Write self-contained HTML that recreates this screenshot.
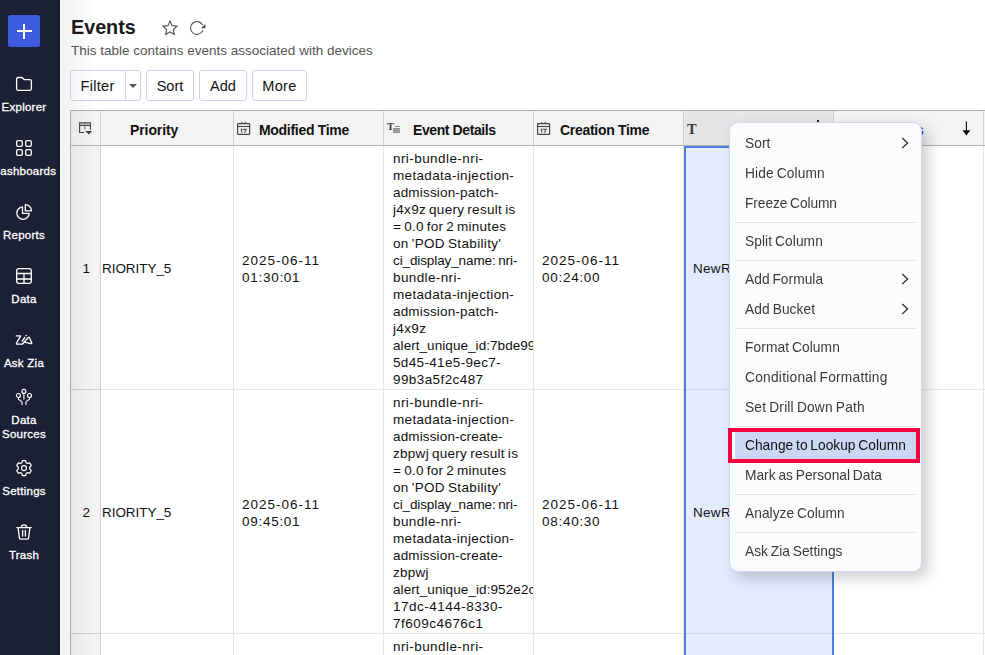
<!DOCTYPE html>
<html>
<head>
<meta charset="utf-8">
<style>
*{box-sizing:border-box;margin:0;padding:0}
html{background:#fff}
html,body{width:985px;height:655px;overflow:hidden;font-family:"Liberation Sans",sans-serif;color:#111}
body{position:relative}
.abs{position:absolute}
/* sidebar */
#side{position:absolute;left:0;top:0;width:60px;height:655px;background:#1c2035;overflow:hidden;border-right:1px solid #12162b}
#plus{position:absolute;left:8px;top:15px;width:32px;height:32px;background:#3f5be0;border-radius:2px}
#plus:before{content:"";position:absolute;left:8.5px;top:15.3px;width:15.5px;height:2px;background:#fff}
#plus:after{content:"";position:absolute;left:15.3px;top:8.5px;width:2px;height:15.5px;background:#fff}
.nav{position:absolute;left:-26px;width:100px;text-align:center;color:#fff;font-size:11.5px;line-height:14px;white-space:nowrap;letter-spacing:.25px;-webkit-text-stroke:.3px #fff}
.ico{position:absolute;left:16px;width:16px;height:16px}
.ico svg{display:block;width:16px;height:16px;overflow:visible;fill:none;stroke:#fff;stroke-width:1.3;stroke-linecap:round;stroke-linejoin:round}
#shade{position:absolute;left:61px;top:0;width:36px;height:655px;background:linear-gradient(to right,rgba(0,0,0,.05),rgba(0,0,0,.045) 10px,rgba(0,0,0,.02) 24px,rgba(0,0,0,0) 36px);z-index:4;pointer-events:none}
/* header */
#title{position:absolute;left:71px;top:12.5px;font-size:21px;font-weight:bold;line-height:28px;color:#1a1a1a;transform-origin:0 0;transform:scaleX(.94)}
#sub{position:absolute;left:71px;top:42px;font-size:13.5px;line-height:18px;color:#555;white-space:nowrap}
.btn{position:absolute;top:70px;height:31px;border:1px solid #cfd4ee;border-radius:3px;background:#fff;font-size:14.5px;line-height:29px;text-align:center;color:#111}
/* table */
#tbl{z-index:0;position:absolute;left:70px;top:110px;width:915px;height:545px;border-top:1px solid #b0b0b0;border-left:1px solid #b4b4b4;overflow:hidden}
.hd{position:absolute;top:0;height:35px;background:#f3f3f3;border-right:1px solid #d0d0d0;border-bottom:1px solid #b4b4b4;font-weight:bold;font-size:14px;line-height:38px;white-space:nowrap;color:#111}
.col{position:absolute;top:35px;height:510px;border-right:1px solid #e5e5e5}
.rowline{position:absolute;left:0;width:915px;height:1px;background:linear-gradient(to right,#d0d0d0 30px,#e8e8e8 30px)}
.cell{position:absolute;font-size:13.5px;line-height:17px;color:#111;white-space:nowrap;letter-spacing:.1px}
.ev{width:140px;overflow:hidden;word-spacing:-1px;font-size:13.5px}
/* menu */
#menu{position:absolute;left:729px;top:122px;width:193px;height:450px;background:#fbfcfe;border:1px solid #d3d8f1;border-radius:9px;box-shadow:6px 6px 15px rgba(0,0,0,.2);z-index:5;will-change:transform;opacity:.999}
.mi{position:absolute;left:15px;word-spacing:-1px;font-size:13.75px;line-height:31px;color:#2a2a2a;white-space:nowrap;height:30px}
.sep{position:absolute;left:5px;width:181px;height:1px;background:#e2e4ea}
.chev{position:absolute;left:171px;width:8px;height:12px}
</style>
</head>
<body>
<!-- table -->
<div id="tbl">
  <div class="hd" style="left:0;width:30px"><svg class="abs" style="left:7px;top:11px;width:15px;height:14px" viewBox="0 0 15 14"><path d="M6.2 10.5 H1.6 V0.9 H12.4 V7.7 M1.6 3.3 H12.4" fill="none" stroke="#444" stroke-width="1.15"/><path d="M6.9 0.9 V7.6" fill="none" stroke="#777" stroke-width="1.15"/><path d="M7.4 9 H14.1 L10.75 12.5 Z" fill="#3a3a3a"/></svg></div>
  <div class="hd" style="left:30px;width:133px"><span class="abs" style="left:29px;letter-spacing:-.1px">Priority</span></div>
  <div class="hd" style="left:163px;width:150px"><svg class="abs" style="left:3px;top:10px;width:14px;height:14px" viewBox="0 0 14 14"><rect x="0.6" y="2.6" width="12" height="10.8" rx="0.5" fill="none" stroke="#444" stroke-width="1.2"/><path d="M0.6 5.5 H12.6" stroke="#444" stroke-width="1.1"/><path d="M4.9 0.8 V2.6 M8.4 0.8 V2.6" stroke="#666" stroke-width="1.3"/><path d="M3.6 9 L4.7 8.2 V11.8 M6.2 8.4 H9.2 L7.4 11.8" fill="none" stroke="#555" stroke-width="1.15"/></svg><span class="abs" style="left:25px;letter-spacing:-.3px">Modified Time</span></div>
  <div class="hd" style="left:313px;width:150px"><span class="abs" style="left:3px;top:10px;line-height:12px;font-family:'Liberation Serif',serif;font-size:10.5px;color:#3a3a3a;font-weight:bold">T</span><span class="abs" style="left:11px;top:15px;width:5px;height:1px;background:#8c8c8c"></span><span class="abs" style="left:9px;top:17px;width:7px;height:5px;background:repeating-linear-gradient(#909090 0,#909090 1px,#a8a8a8 1px,#a8a8a8 2px)"></span><span class="abs" style="left:29px;letter-spacing:-.4px">Event Details</span></div>
  <div class="hd" style="left:463px;width:150px"><svg class="abs" style="left:3px;top:10px;width:14px;height:14px" viewBox="0 0 14 14"><rect x="0.6" y="2.6" width="12" height="10.8" rx="0.5" fill="none" stroke="#444" stroke-width="1.2"/><path d="M0.6 5.5 H12.6" stroke="#444" stroke-width="1.1"/><path d="M4.9 0.8 V2.6 M8.4 0.8 V2.6" stroke="#666" stroke-width="1.3"/><path d="M3.6 9 L4.7 8.2 V11.8 M6.2 8.4 H9.2 L7.4 11.8" fill="none" stroke="#555" stroke-width="1.15"/></svg><span class="abs" style="left:26px;letter-spacing:-.3px">Creation Time</span></div>
  <div class="hd" style="left:613px;width:150px;background:#e6e6e6"><span class="abs" style="left:3px;top:-1px;font-family:'Liberation Serif',serif;font-size:14.5px;color:#3a3a3a;font-weight:bold">T</span><span class="abs" style="left:133px;top:9px;width:2px;height:3px;background:#222"></span></div>
  <div class="hd" style="left:763px;width:150px"><span class="abs" style="left:82px;top:0;color:#1a4fc0;font-weight:bold;font-size:14px">s</span><svg class="abs" style="left:127px;top:10px;width:10px;height:15px" viewBox="0 0 10 15"><path d="M5.4 0.6 V11" stroke="#000" stroke-width="1.1"/><path d="M1.5 9.2 H9.3 L5.4 14.5 Z" fill="#000"/></svg></div><div class="hd" style="left:913px;width:10px"></div>
  <div class="col" style="left:0;width:30px;background:#f3f3f3;border-right:1px solid #d0d0d0"></div>
  <div class="col" style="left:30px;width:133px"></div>
  <div class="col" style="left:163px;width:150px"></div>
  <div class="col" style="left:313px;width:150px"></div>
  <div class="col" style="left:463px;width:150px"></div>
  <div class="col" style="left:613px;width:150px"></div>
  <div class="col" style="left:763px;width:150px"></div>
  <div class="rowline" style="top:278px"></div>
  <div class="rowline" style="top:522px"></div>
<div class="cell" style="left:11.5px;top:149px">1</div>
<div class="cell" style="left:31px;top:149px;letter-spacing:-.05px">RIORITY_5</div>
<div class="cell" style="left:171px;top:141px"><span style="letter-spacing:1px">2025-06-11</span><br><span style="letter-spacing:.72px">01:30:01</span></div>
<div class="cell" style="left:471px;top:141px"><span style="letter-spacing:1px">2025-06-11</span><br><span style="letter-spacing:.72px">00:24:00</span></div>
<div class="cell ev" style="left:322px;top:39px"><span style="display:block;letter-spacing:0.432px">nri-bundle-nri-</span><span style="display:block;letter-spacing:0.333px">metadata-injection-</span><span style="display:block;letter-spacing:0.174px">admission-patch-</span><span style="display:block;letter-spacing:0.294px">j4x9z query result is</span><span style="display:block;letter-spacing:0.262px">= 0.0 for 2 minutes</span><span style="display:block;letter-spacing:0.335px">on 'POD Stability'</span><span style="display:block;letter-spacing:-0.108px">ci_display_name: nri-</span><span style="display:block;letter-spacing:0.375px">bundle-nri-</span><span style="display:block;letter-spacing:0.333px">metadata-injection-</span><span style="display:block;letter-spacing:0.174px">admission-patch-</span><span style="display:block;letter-spacing:0.371px">j4x9z</span><span style="display:block;letter-spacing:0.059px">alert_unique_id:7bde99</span><span style="display:block;letter-spacing:0.341px">5d45-41e5-9ec7-</span><span style="display:block;letter-spacing:0.41px">99b3a5f2c487</span></div>
<div class="cell" style="left:622px;top:149px;z-index:3;letter-spacing:.3px">NewR</div>
<div class="cell" style="left:11.5px;top:393px">2</div>
<div class="cell" style="left:31px;top:393px;letter-spacing:-.05px">RIORITY_5</div>
<div class="cell" style="left:171px;top:385px"><span style="letter-spacing:1px">2025-06-11</span><br><span style="letter-spacing:.72px">09:45:01</span></div>
<div class="cell" style="left:471px;top:385px"><span style="letter-spacing:1px">2025-06-11</span><br><span style="letter-spacing:.72px">08:40:30</span></div>
<div class="cell ev" style="left:322px;top:283px"><span style="display:block;letter-spacing:0.432px">nri-bundle-nri-</span><span style="display:block;letter-spacing:0.333px">metadata-injection-</span><span style="display:block;letter-spacing:0.144px">admission-create-</span><span style="display:block;letter-spacing:0.279px">zbpwj query result is</span><span style="display:block;letter-spacing:0.262px">= 0.0 for 2 minutes</span><span style="display:block;letter-spacing:0.335px">on 'POD Stability'</span><span style="display:block;letter-spacing:-0.108px">ci_display_name: nri-</span><span style="display:block;letter-spacing:0.375px">bundle-nri-</span><span style="display:block;letter-spacing:0.333px">metadata-injection-</span><span style="display:block;letter-spacing:0.144px">admission-create-</span><span style="display:block;letter-spacing:0.246px">zbpwj</span><span style="display:block;letter-spacing:0.089px">alert_unique_id:952e2c</span><span style="display:block;letter-spacing:0.484px">17dc-4144-8330-</span><span style="display:block;letter-spacing:0.479px">7f609c4676c1</span></div>
<div class="cell" style="left:622px;top:393px;z-index:3;letter-spacing:.3px">NewR</div>
<div class="cell ev" style="left:322px;top:527px"><span style="display:block;letter-spacing:0.432px">nri-bundle-nri-</span></div>
  <div class="abs" id="selcol" style="left:613px;top:35px;width:150px;height:520px;background:rgba(66,120,240,.15);border:2px solid #4a7fe0"></div>
</div>

<div id="menu">
<div class="abs" style="left:5px;top:309px;width:181px;height:27px;background:#cbd7f3;border-radius:0 0 0 2px"></div>
<div class="abs" style="left:-2px;top:305px;width:192px;height:35px;border:4px solid #f2033f"></div>
<div class="mi" style="top:5px;color:#3a3a3a;letter-spacing:0.06px">Sort</div>
<svg class="chev" style="top:14px" viewBox="0 0 8 12"><path d="M1.2 1 L6.6 6 L1.2 11" fill="none" stroke="#333" stroke-width="1.3"/></svg>
<div class="mi" style="top:35px;color:#3a3a3a;letter-spacing:0.112px">Hide Column</div>
<div class="mi" style="top:65px;color:#3a3a3a;letter-spacing:-0.083px">Freeze Column</div>
<div class="mi" style="top:103px;color:#3a3a3a;letter-spacing:0.077px">Split Column</div>
<div class="mi" style="top:141px;color:#3a3a3a;letter-spacing:0.038px">Add Formula</div>
<svg class="chev" style="top:150px" viewBox="0 0 8 12"><path d="M1.2 1 L6.6 6 L1.2 11" fill="none" stroke="#333" stroke-width="1.3"/></svg>
<div class="mi" style="top:171px;color:#3a3a3a;letter-spacing:0.086px">Add Bucket</div>
<svg class="chev" style="top:180px" viewBox="0 0 8 12"><path d="M1.2 1 L6.6 6 L1.2 11" fill="none" stroke="#333" stroke-width="1.3"/></svg>
<div class="mi" style="top:209px;color:#3a3a3a;letter-spacing:0.087px">Format Column</div>
<div class="mi" style="top:239px;color:#3a3a3a;letter-spacing:0.241px">Conditional Formatting</div>
<div class="mi" style="top:269px;color:#3a3a3a;letter-spacing:0.193px">Set Drill Down Path</div>
<div class="mi" style="top:307px;color:#111;letter-spacing:0.009px">Change to Lookup Column</div>
<div class="mi" style="top:337px;color:#3a3a3a;letter-spacing:0.002px">Mark as Personal Data</div>
<div class="mi" style="top:375px;color:#3a3a3a;letter-spacing:0.037px">Analyze Column</div>
<div class="mi" style="top:413px;color:#3a3a3a;letter-spacing:0.009px">Ask Zia Settings</div>
<div class="sep" style="top:99px"></div>
<div class="sep" style="top:137px"></div>
<div class="sep" style="top:205px"></div>
<div class="sep" style="top:303px"></div>
<div class="sep" style="top:371px"></div>
<div class="sep" style="top:409px"></div>
</div>

<div id="side">
  <div id="plus"></div>
  <div class="ico" style="top:76px"><svg viewBox="0 0 16 16"><path d="M0.6 3 Q0.6 1.5 2.1 1.5 H5.4 Q6.1 1.5 6.6 2 L7.9 3.2 Q8.4 3.7 9.1 3.7 H13.9 Q15.4 3.7 15.4 5.2 V12.8 Q15.4 14.3 13.9 14.3 H2.1 Q0.6 14.3 0.6 12.8 Z"/></svg></div>
  <div class="nav" style="top:100px">Explorer</div>
  <div class="ico" style="top:140px"><svg viewBox="0 0 16 16"><rect x="0.7" y="0.7" width="5.6" height="5.6" rx="1.2"/><rect x="9.7" y="0.7" width="5.6" height="5.6" rx="1.2"/><rect x="0.7" y="9.7" width="5.6" height="5.6" rx="1.2"/><rect x="9.7" y="9.7" width="5.6" height="5.6" rx="1.2"/></svg></div>
  <div class="nav" style="top:164px">Dashboards</div>
  <div class="ico" style="top:204px"><svg viewBox="0 0 16 16"><path d="M6.5 2.9 A6.2 6.2 0 1 0 13.2 9.4 H6.5 Z"/><path d="M9.3 0.7 A6.2 6.2 0 0 1 15.5 6.8 H9.3 Z"/></svg></div>
  <div class="nav" style="top:228px">Reports</div>
  <div class="ico" style="top:268px"><svg viewBox="0 0 16 16"><rect x="0.7" y="0.7" width="14.6" height="14.6" rx="1.8"/><path d="M0.7 5.5 H15.3 M0.7 11 H15.3 M8 5.5 V15.3"/></svg></div>
  <div class="nav" style="top:292px">Data</div>
  <div class="ico" style="top:332px"><svg viewBox="0 0 16 16"><path d="M0.3 3.9 H4.6 L0.6 11 Q0 12.2 1.3 12.2 H6.3 L12.5 5.3 Q13 4.7 13.4 5.5 L15.7 10.8 Q16 11.8 15 11.6 L8.5 10.2"/><path d="M6.1 9.3 L8.8 5.5"/><circle cx="10.1" cy="3.6" r="0.5" fill="#fff" stroke-width="0.6"/></svg></div>
  <div class="nav" style="top:356px">Ask Zia</div>
  <div class="ico" style="top:389px"><svg viewBox="0 0 16 16" style="stroke-width:1.15"><circle cx="7.9" cy="2.4" r="2"/><circle cx="2.4" cy="6.5" r="2"/><circle cx="13.5" cy="6.5" r="2"/><path d="M7.9 4.6 V10.2 M2.4 8.5 V9.4 Q2.4 10.4 3.6 11.1 Q6 12.3 6 13.6 V15.4 M13.5 8.5 V9.4 Q13.5 10.4 12.3 11.1 Q9.9 12.3 9.9 13.6 V15.4"/></svg></div>
  <div class="nav" style="top:413px">Data<br>Sources</div>
  <div class="ico" style="top:460px"><svg viewBox="0 0 16 16"><path d="M6.6 0.8 H9.4 L9.9 2.8 L11.2 3.5 L13.1 2.9 L14.5 5.3 L13.1 6.8 V8.3 L14.5 9.8 L13.1 12.2 L11.2 11.6 L9.9 12.3 L9.4 14.3 H6.6 L6.1 12.3 L4.8 11.6 L2.9 12.2 L1.5 9.8 L2.9 8.3 V6.8 L1.5 5.3 L2.9 2.9 L4.8 3.5 L6.1 2.8 Z" transform="translate(8,8.1) scale(1.12) translate(-8,-7.55)" stroke-width="1.05"/><circle cx="8" cy="8.1" r="2.5" stroke-width="1.15"/></svg></div>
  <div class="nav" style="top:484px">Settings</div>
  <div class="ico" style="top:524px"><svg viewBox="0 0 16 16"><path d="M0.8 3.6 H15.2 M5.3 3.6 Q5.3 0.8 8 0.8 Q10.7 0.8 10.7 3.6 M2.1 3.6 L3.4 13.8 Q3.6 15.2 5 15.2 H11 Q12.4 15.2 12.6 13.8 L13.9 3.6 M6.6 6.4 V12 M9.4 6.4 V12"/></svg></div>
  <div class="nav" style="top:548px">Trash</div>
</div>
<div id="shade"></div>
<div id="title">Events</div>
<svg class="abs" style="left:160px;top:18px;width:20px;height:20px" viewBox="0 0 20 20"><path d="M10.00 3.10 L12.06 7.67 L17.04 8.21 L13.33 11.58 L14.35 16.49 L10.00 14.00 L5.65 16.49 L6.67 11.58 L2.96 8.21 L7.94 7.67 Z" fill="none" stroke="#505050" stroke-width="1.1" stroke-linejoin="miter"/></svg>
<svg class="abs" style="left:188px;top:18px;width:20px;height:20px" viewBox="0 0 20 20"><path d="M14.7 12.7 A6.4 6.4 0 1 1 14.4 6.7" fill="none" stroke="#505050" stroke-width="1.1" stroke-linecap="round"/><path d="M17.4 6 V10.3 H12.9 Z" fill="#505050"/></svg>
<div id="sub">This table contains events associated with devices</div>
<div class="btn" style="left:70px;width:71px"><span class="abs" style="left:0;top:1px;width:53px;letter-spacing:.3px">Filter</span><span class="abs" style="left:54px;top:0;width:1px;height:29px;background:#cfd4ee"></span><span class="abs" style="left:58px;top:13px;width:0;height:0;border-left:4px solid transparent;border-right:4px solid transparent;border-top:4.5px solid #555"></span></div>
<div class="btn" style="left:146px;width:48px;padding-top:1px">Sort</div>
<div class="btn" style="left:199px;width:48px;padding-top:1px">Add</div>
<div class="btn" style="left:252px;width:55px;padding-top:1px;letter-spacing:.4px">More</div>
</body>
</html>
